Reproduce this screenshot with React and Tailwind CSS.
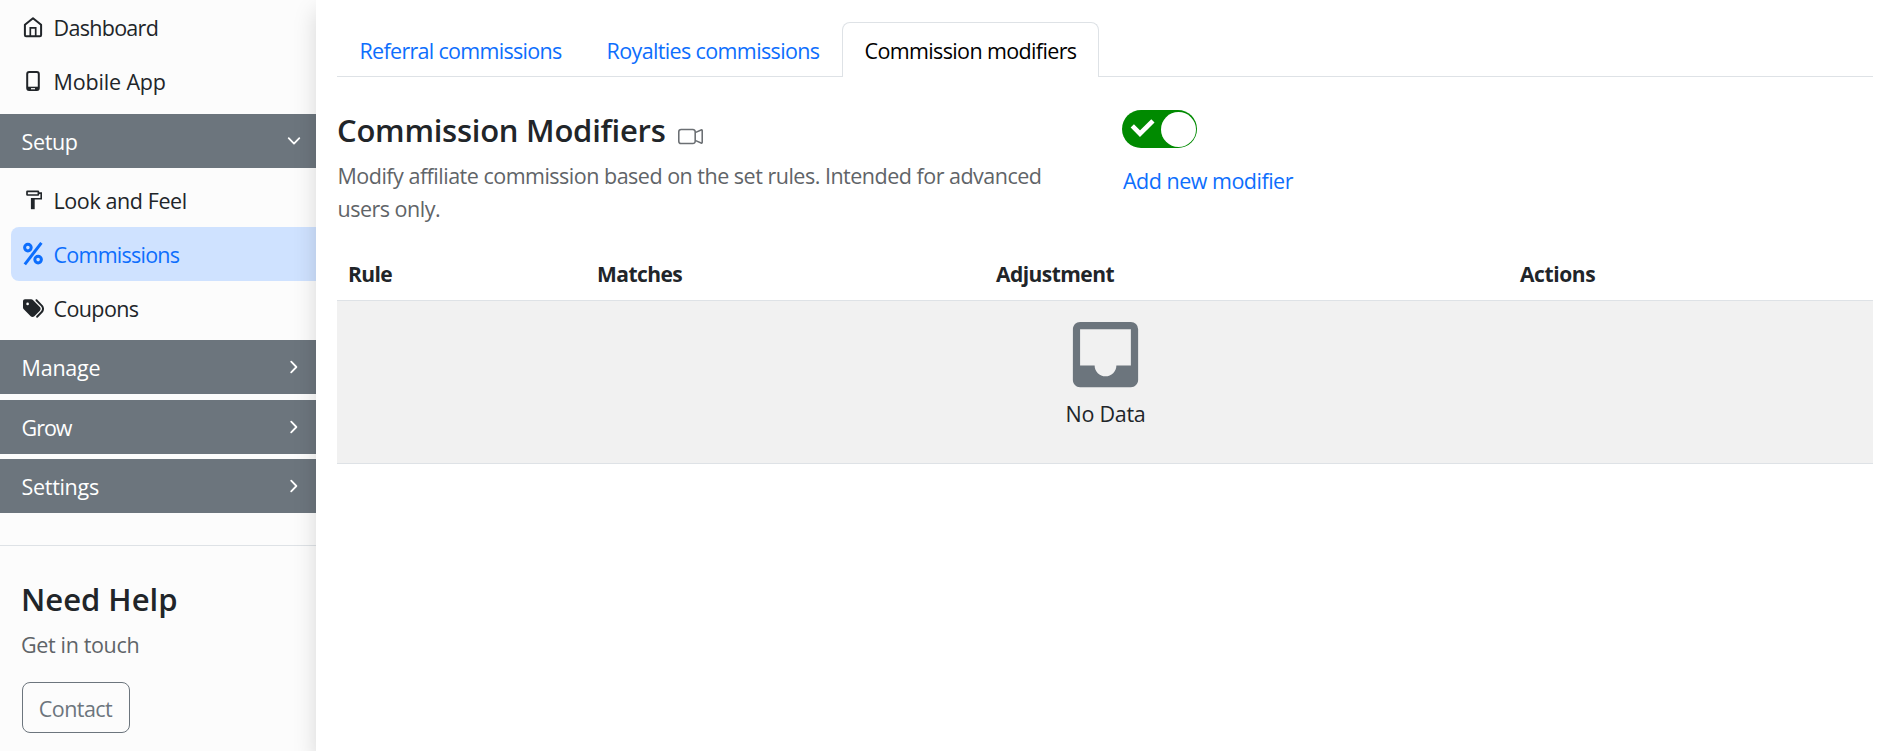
import React from "react";
import { FaTags } from "react-icons/fa6";
import { BsCameraVideo } from "react-icons/bs";
import { MdInbox } from "react-icons/md";

function HomeIcon() {
  return (
    <svg width="22" height="22" viewBox="0 0 22 22" fill="none" stroke="currentColor" strokeWidth="2" strokeLinejoin="round">
      <path d="M11 2.2 2.9 8.8V19q0 1.2 1.2 1.2h13.8q1.2 0 1.2-1.2V8.8z" />
      <path d="M8.3 20v-8.2h5.4V20" strokeWidth="1.7" strokeLinejoin="miter" />
    </svg>
  );
}

function PhoneIcon() {
  return (
    <svg width="22" height="22" viewBox="0 0 22 22" fill="none" stroke="currentColor">
      <rect x="5.2" y="2.1" width="11.6" height="18" rx="2" strokeWidth="2" />
      <path d="M5.2 18.4h11.6" strokeWidth="3.4" />
      <path d="M9 18.7h4" stroke="#fcfcfc" strokeWidth="1.2" />
    </svg>
  );
}

function RollerIcon() {
  return (
    <svg width="22" height="22" viewBox="0 0 22 22" fill="none" stroke="currentColor">
      <rect x="5" y="2.3" width="11.4" height="3.7" rx="0.4" strokeWidth="1.7" />
      <path d="M17 4.1h2.2v5.6h-8.4" strokeWidth="1.6" />
      <path d="M10.8 9v11.2" strokeWidth="3.8" />
    </svg>
  );
}

function PercentIcon() {
  return (
    <svg width="22" height="24" viewBox="0 0 22 24" fill="none" stroke="currentColor" strokeWidth="3">
      <circle cx="5.9" cy="5.6" r="3.3" />
      <circle cx="16.1" cy="17.6" r="3.3" />
      <path d="M19.4 0.9 2.8 22.4" />
    </svg>
  );
}

function Chevron({ open }) {
  return (
    <svg width="16" height="16" viewBox="0 0 16 16" fill="none" stroke="currentColor" strokeWidth="1.8" strokeLinecap="round" strokeLinejoin="round">
      <path d={open ? "M2.7 5.2 8 10.6l5.3-5.4" : "M5.2 2.7 10.4 8l-5.2 5.3"} />
    </svg>
  );
}

function NavItem({ icon, active, children }) {
  return (
    <a
      className={
        "ml-[11px] flex h-[54px] items-center rounded-l-lg pl-[11px] " +
        (active ? "bg-[#cfe2ff] text-[#0d6efd]" : "text-[#212529]")
      }
    >
      <span className="flex w-[22px] justify-center">{icon}</span>
      <span className="ml-[9.5px] pt-[2px]">{children}</span>
    </a>
  );
}

function Group({ open, children }) {
  return (
    <div className="flex h-[54px] items-center justify-between bg-[#6c757d] pl-[21.5px] pr-[14px] text-white">
      <span className="pt-[1.5px]">{children}</span>
      <Chevron open={open} />
    </div>
  );
}

export default function App() {
  return (
    <div className="flex h-[751px] w-full overflow-hidden bg-white font-['Open_Sans',sans-serif] text-[21.5px] leading-[33.5px] text-[#212529]">
      <aside className="w-[316px] shrink-0 bg-[#fcfcfc]">
        <NavItem icon={<HomeIcon />}><span className="tracking-[-0.7px]">Dashboard</span></NavItem>
        <NavItem icon={<PhoneIcon />}><span className="tracking-[-0.15px]">Mobile App</span></NavItem>
        <div className="mt-[6px]">
          <Group open><span className="tracking-[-0.35px]">Setup</span></Group>
        </div>
        <div className="mb-[5px] mt-[5px]">
          <NavItem icon={<RollerIcon />}><span className="tracking-[-0.4px]">Look and Feel</span></NavItem>
          <NavItem active icon={<PercentIcon />}><span className="tracking-[-0.75px]">Commissions</span></NavItem>
          <NavItem icon={<FaTags className="h-[21px] w-[21px]" />}><span className="tracking-[-0.6px]">Coupons</span></NavItem>
        </div>
        <div className="flex flex-col">
          <Group><span className="tracking-[-0.2px]">Manage</span></Group>
          <div className="mb-[5px] mt-[6px]">
            <Group><span className="tracking-[-1px]">Grow</span></Group>
          </div>
          <Group><span className="tracking-[-0.3px]">Settings</span></Group>
        </div>
        <div className="mt-8 border-t border-[#dee2e6] pl-[21px]">
          <h2 className="mt-[32px] text-[31px] font-semibold leading-[42px]">Need Help</h2>
          <p className="mt-[8px] tracking-[-0.35px] text-[#5f6468]">Get in touch</p>
          <button className="ml-px mt-[20px] flex h-[51px] w-[108px] items-center justify-center rounded-lg border border-[#6c757d] pr-px pt-[3px] tracking-[-0.55px] text-[#6c757d]">
            Contact
          </button>
        </div>
      </aside>

      <main className="relative min-w-0 flex-1 bg-white pl-[21px] pr-[20px] pt-[22px] shadow-[0_11px_22px_rgba(0,0,0,0.15)]">
        <nav className="flex h-[55px] border-b border-[#dee2e6] text-[#0d6efd]">
          <a className="flex w-[247px] items-center justify-center pt-[3px] tracking-[-0.7px]">Referral commissions</a>
          <a className="flex w-[258px] items-center justify-center pt-[3px] tracking-[-0.63px]">Royalties commissions</a>
          <a className="-mb-px flex w-[257px] items-center justify-center rounded-t-lg border border-b-0 border-[#dee2e6] bg-white pt-px tracking-[-0.63px] text-black">
            Commission modifiers
          </a>
        </nav>

        <section className="flex h-[169px]">
          <div className="w-[785px] pt-[33px]">
            <h1 className="flex h-[42px] items-center text-[31px] font-semibold tracking-[-0.25px]">
              Commission Modifiers
              <BsCameraVideo className="ml-[13px] mt-[10px] h-[25px] w-[25px] text-[#6b6f73]" />
            </h1>
            <p className="mt-[7px] w-[740px] pl-[0.5px] leading-[33px] tracking-[-0.5px] text-[#5f6468]">
              Modify affiliate commission based on the set rules. Intended for advanced users only.
            </p>
          </div>
          <div className="pt-[33px]">
            <button className="flex h-[38px] w-[75px] items-center justify-between rounded-full bg-[#008a00] pr-px">
              <svg width="38" height="38" viewBox="0 0 38 38" fill="none" stroke="#fff" strokeWidth="4.6">
                <path d="m10.3 15.8 7.7 7.9 12.9-12.9" />
              </svg>
              <span className="h-[35px] w-[35px] rounded-full bg-white" />
            </button>
            <a className="ml-px mt-[16px] block tracking-[-0.5px] text-[#0d6efd]">Add new modifier</a>
          </div>
        </section>

        <table className="w-full table-fixed border-collapse">
          <thead>
            <tr className="h-[54px] border-b border-[#dee2e6] text-left text-[21px]">
              <th className="w-[249px] p-0 pl-[11px] pt-[3px] tracking-[-0.6px]">Rule</th>
              <th className="w-[399px] p-0 pl-[11px] pt-[3px] tracking-[-0.55px]">Matches</th>
              <th className="w-[524px] p-0 pl-[11px] pt-[3px] tracking-[-0.55px]">Adjustment</th>
              <th className="p-0 pl-[11px] pt-[3px] tracking-[-0.4px]">Actions</th>
            </tr>
          </thead>
          <tbody>
            <tr className="h-[163px] border-b border-[#dee2e6] bg-[#f1f1f1]">
              <td colSpan={4} className="p-0 align-top">
                <div className="flex flex-col items-center pt-[10.5px]">
                  <MdInbox className="h-[87px] w-[87px] text-[#6c757d]" />
                  <span className="-mt-px pl-px tracking-[-0.25px]">No Data</span>
                </div>
              </td>
            </tr>
          </tbody>
        </table>
      </main>
    </div>
  );
}
